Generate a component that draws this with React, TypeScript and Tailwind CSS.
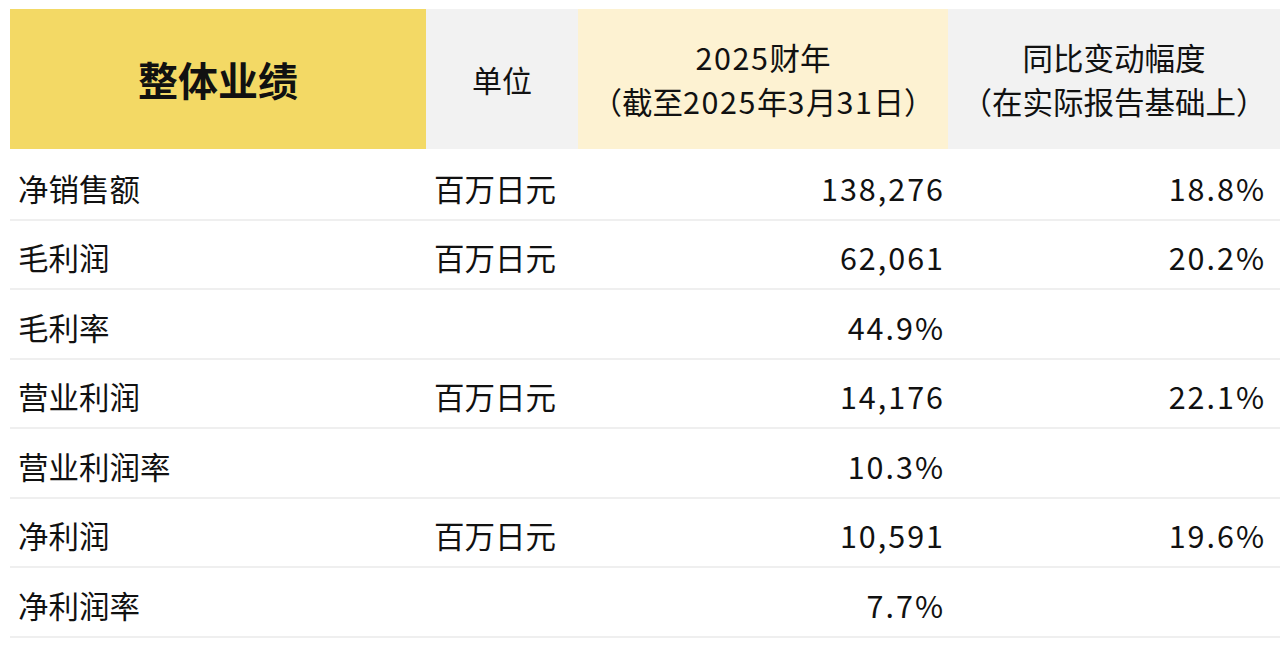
import React from "react";

const rows: { name: string; unit: string; value: string; change: string }[] = [
  { name: "净销售额", unit: "百万日元", value: "138,276", change: "18.8%" },
  { name: "毛利润", unit: "百万日元", value: "62,061", change: "20.2%" },
  { name: "毛利率", unit: "", value: "44.9%", change: "" },
  { name: "营业利润", unit: "百万日元", value: "14,176", change: "22.1%" },
  { name: "营业利润率", unit: "", value: "10.3%", change: "" },
  { name: "净利润", unit: "百万日元", value: "10,591", change: "19.6%" },
  { name: "净利润率", unit: "", value: "7.7%", change: "" },
];

function Digits({ text }: { text: string }) {
  const parts = text.split(/(\d+)/);
  return (
    <>
      {parts.map((p, i) =>
        /^\d+$/.test(p) ? (
          <span key={i} className="tracking-[1.6px]">
            {p}
          </span>
        ) : (
          <span key={i}>{p}</span>
        )
      )}
    </>
  );
}

export default function App() {
  return (
    <div
      className="w-[1280px] h-[652px] bg-white pl-[10px] pt-[9px] text-[#111111] overflow-hidden"
      style={{ fontFamily: '"Noto Sans CJK SC", "Noto Sans", sans-serif' }}
    >
      <div className="grid grid-cols-[416px_152px_370px_332px] h-[140px]">
        <div className="bg-[#f3d965] flex items-center justify-center text-[40px] font-bold leading-none">
          整体业绩
        </div>
        <div className="bg-[#f2f2f2] flex items-center justify-center text-[30px] leading-none">
          单位
        </div>
        <div className="bg-[#fdf2d2] flex flex-col items-center justify-center text-[30.5px] leading-[44px]">
          <div>
            <Digits text="2025财年" />
          </div>
          <div>
            <Digits text="（截至2025年3月31日）" />
          </div>
        </div>
        <div className="bg-[#f2f2f2] flex flex-col items-center justify-center text-[30.5px] leading-[44px]">
          <div>同比变动幅度</div>
          <div>（在实际报告基础上）</div>
        </div>
      </div>
      <div className="pt-[2px]">
        {rows.map((r) => (
          <div
            key={r.name}
            className="grid grid-cols-[416px_152px_370px_332px] h-[69.5px] pt-[6px] border-b-2 border-[#efefef] items-center text-[30.5px] leading-none"
          >
            <div className="pl-[8px]">{r.name}</div>
            <div className="pl-[8px]">{r.unit}</div>
            <div className="text-right pr-[3px] tracking-[2px]">{r.value}</div>
            <div className="text-right pr-[14px] tracking-[2px]">{r.change}</div>
          </div>
        ))}
      </div>
    </div>
  );
}
